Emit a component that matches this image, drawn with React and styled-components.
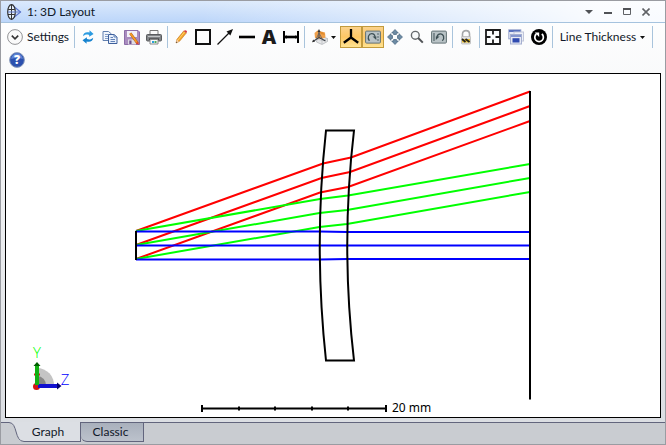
import React, { useState } from 'react';
import styled, { createGlobalStyle, css } from 'styled-components';

const GlobalStyle = createGlobalStyle`
  * {
    box-sizing: border-box;
  }

  body {
    margin: 0;
    font-family: Lato, 'Open Sans', sans-serif;
    font-size: 12px;
    line-height: 16px;
    color: #101828;
  }

  button {
    font: inherit;
    color: inherit;
    border: 0;
    padding: 0;
    background: none;
  }

  svg {
    display: block;
    flex: none;
  }
`;

const Window = styled.div`
  display: flex;
  flex-direction: column;
  min-height: 100vh;
  border: 1px solid #9a9ca2;
  background: linear-gradient(#ffffff, #f8f9fa 20%, #d9dce1);
`;

const TitleBar = styled.header`
  display: flex;
  align-items: center;
  height: 22px;
  padding: 0 10px 0 6px;
  gap: 4px;
  border-bottom: 1px solid #a6c3de;
  background:
    linear-gradient(90deg, transparent 30%, rgba(255, 255, 255, 0.9) 90%),
    linear-gradient(#dbe9fc, #bcd6fa);
`;

const Title = styled.h1`
  flex: 1;
  margin: 0;
  font-size: 12px;
  font-weight: 400;
`;

const WindowButtons = styled.div`
  display: flex;
`;

const WindowButton = styled.button`
  display: grid;
  place-items: center;
  width: 19px;
  height: 20px;
`;

const Toolbar = styled.div`
  display: flex;
  flex-wrap: wrap;
  align-items: center;
  row-gap: 1px;
  padding: 3px 5px 2px;
`;

const buttonStyle = css`
  display: flex;
  align-items: center;
  justify-content: center;
  height: 22px;
`;

const ToolButton = styled.button`
  ${buttonStyle}
  width: ${({ $wide }) => ($wide ? 24 : 22)}px;

  ${({ $active }) =>
    $active &&
    css`
      border: 1px solid #c29b3d;
      background: linear-gradient(#fbd28c, #fdc765 50%, #ffe391);
    `}
`;

const SettingsButton = styled.button`
  ${buttonStyle}
  justify-content: flex-start;
  gap: 4px;
  width: 66px;
  padding-left: 1px;
`;

const ViewButton = styled.button`
  ${buttonStyle}
  gap: 3px;
  width: 33px;
`;

const ThicknessButton = styled.button`
  ${buttonStyle}
  gap: 4px;
  width: 95px;
`;

const Separator = styled.span`
  width: 1px;
  height: 22px;
  margin: 0 2px;
  background: #a9c4dc;
`;

const Plot = styled.main`
  display: flex;
  flex: 1;
  margin: 0 4px 4px;
  border: 1px solid #000;
  background: #fff;
`;

const Drawing = styled.svg`
  flex: 1;
  width: 100%;
  min-width: 0;
`;

const ScaleText = styled.text`
  font-family: 'Noto Sans', sans-serif;
  font-size: 12px;
`;

const AxisText = styled.text`
  font-family: 'Open Sans', sans-serif;
  font-size: 15px;
  font-weight: 300;
  text-anchor: middle;
`;

const IconText = styled.text`
  font-family: 'Open Sans', sans-serif;
  font-size: 12px;
  font-weight: 800;
  text-anchor: middle;
`;

const Letter = styled.span`
  font-family: 'Open Sans', sans-serif;
  font-size: 20px;
  font-weight: 800;
  line-height: 22px;
  color: #1b1b1b;
`;

const TabStrip = styled.nav`
  display: flex;
  align-items: flex-start;
  height: 22px;
  background: #c9ccd1;
`;

const tabStyle = css`
  height: 20px;
  border-right: 1px solid #62657d;
  border-bottom: 1px solid #62657d;
`;

const GraphTab = styled.button`
  ${tabStyle}
  width: 57px;
  padding-right: 8px;
  background: #dcdfe4;
`;

const ClassicTab = styled.button`
  ${tabStyle}
  width: 63px;
  padding-right: 3px;
  border-top: 1px solid #62657d;
  border-bottom-left-radius: 6px;
  background: linear-gradient(#a9b0bc, #bcc2cc);
`;

const StripLine = styled.span`
  flex: 1;
  border-top: 1px solid #62657d;
`;

const Caret = ({ size = 5 }) => (
  <svg width={size} height="3" viewBox="0 0 5 3" preserveAspectRatio="none">
    <path d="M0 0H5L2.5 3Z" fill="#111" />
  </svg>
);

const Icon = ({ children }) => (
  <svg width="16" height="16" viewBox="0 0 16 16" fill="none" aria-hidden="true">
    {children}
  </svg>
);

const icons = {
  lens: (
    <>
      <path d="M5 1 13.5 8 5 15Z" stroke="#5f78d0" strokeWidth="1.2" fill="#cfdff8" />
      <ellipse cx="4.5" cy="8" rx="3.8" ry="7.3" fill="#e4effc" stroke="#333" strokeWidth="1.2" />
      <path d="M4.5 .5V15.5M1.2 5.5H7.8M1 10.5H7.8" stroke="#333" />
      <path d="M1 8H14" stroke="#5f78c8" />
    </>
  ),
  settings: (
    <>
      <circle cx="8" cy="8" r="7.4" fill="#fafafa" stroke="#77797c" strokeWidth="0.8" />
      <path d="M4.8 6.6 8 9.8 11.2 6.6" stroke="#333" strokeWidth="1.6" />
    </>
  ),
  refresh: (
    <>
      <path d="M3 7.2C3.2 4 6 2.6 9.5 3.6V1.2L13.6 4.9 9.2 7.8V5.9C6.7 5 5 5.4 3 7.2Z" fill="#2c9be0" />
      <path d="M13.2 8.8C13 12 10 13.5 6.6 12.4V14.8L2.5 11.2 6.9 8.2V10.1C9.3 11 11.2 10.6 13.2 8.8Z" fill="#1683cf" />
    </>
  ),
  copy: (
    <>
      <path d="M1 2.5H6.5L9.5 5V11.5H1Z" fill="#f2f6fc" stroke="#617faf" />
      <path d="M3 5.5H6M3 7.5H6M3 9.5H6" stroke="#839dc7" />
      <path d="M6.5 5.5H12L15 8V14.5H6.5Z" fill="#e7effb" stroke="#3e609c" />
      <path d="M12 5.5V8H15M8.5 8.5H11M8.5 10.5H13M8.5 12.5H13" stroke="#6383b8" />
    </>
  ),
  save: (
    <>
      <path d="M.5 1.5H14L15.5 3V15.5H.5Z" fill="#a98cbf" stroke="#8c6da8" />
      <path d="M3 2H13V8H3Z" fill="#f2eff8" />
      <path d="M4 10.5H12V15.5H4Z" fill="#dedbe4" />
      <path d="M5.3 11.5H7.5V15H5.3Z" fill="#6d4d8b" />
      <path d="M6.3 4.2 13.7 14.5" stroke="#a85f20" strokeWidth="2.6" />
      <path d="M6.3 4.2 13.7 14.5" stroke="#f69b26" strokeWidth="1.8" />
      <path d="M13 12.4 15.3 15.8 12 14.4Z" fill="#e03b2c" />
    </>
  ),
  print: (
    <>
      <path d="M4 1.5H12V6H4Z" fill="#fafafa" stroke="#777" />
      <rect x=".5" y="5.5" width="15" height="6.5" rx="1" fill="#818487" stroke="#595b5e" />
      <path d="M2 7.5H14" stroke="#c2c4c6" />
      <path d="M3 9.5H13V11H3Z" fill="#333" />
      <path d="M4 10.5H12V15H4Z" fill="#f9fbfc" stroke="#888" />
      <path d="M6 12H8V14H6Z" fill="#2ca0dc" />
      <path d="M8.5 12H10.5V14H8.5Z" fill="#50a85c" />
    </>
  ),
  pencil: (
    <>
      <path d="M3 14 4 10.3 10.7 2 13.3 4 6.5 12.3Z" fill="#f5a42a" stroke="#c1731a" strokeWidth=".6" />
      <path d="M5 11 11.5 3" stroke="#ffd36a" />
      <path d="M10.7 2 12 1.2C13 1 14.3 2 14 3.1L13.3 4Z" fill="#da3d42" />
      <path d="M3 14 4 10.3 5.8 12.6Z" fill="#f2cfab" />
      <path d="M3 14 3.3 12.6 4.2 13.4Z" fill="#333" />
    </>
  ),
  box: <path d="M1 1H15V15H1Z" stroke="#111" strokeWidth="2" />,
  arrow: (
    <>
      <path d="M.5 15.5 12 4" stroke="#111" strokeWidth="1.3" />
      <path d="M16 0 13.4 6.5 9.5 2.6Z" fill="#111" />
    </>
  ),
  line: <path d="M0 8H16" stroke="#000" strokeWidth="2.6" />,
  dimension: (
    <>
      <path d="M1 2V14M15 2V14" stroke="#000" strokeWidth="2" />
      <path d="M2 8H14" stroke="#000" strokeWidth="2.6" />
      <path d="M1.5 8 3.5 6V10ZM14.5 8 12.5 6V10Z" fill="#000" />
    </>
  ),
  view: (
    <>
      <path d="M5 10 10 7.5 15.5 9.5V12.5L10 15.5 4.5 13Z" fill="#e6e7e9" stroke="#aeb1b5" strokeWidth=".7" />
      <path d="M10 11V15M5 10 10 11.5 15.5 9.5" stroke="#b8bbbf" strokeWidth=".7" />
      <path d="M2.5 4 5.5 1.5 13 3.5 13.5 8.5 9 10 3 9Z" fill="#efa04a" />
      <path d="M7 2.5 11 3.5 13 6 9 5Z" fill="#e08a2c" />
      <path d="M7 2V8.5M7 8.5 1 12.5M7 8.5 13.5 12" stroke="#3c4047" strokeWidth="1.1" />
      <path d="M3.8 10.5 7 4 10.5 10.5" stroke="#5d6068" strokeWidth=".8" />
      <path d="M7 0 8.5 3H5.5ZM0 13.3 1.2 10.5 3 12.8Z" fill="#333" />
    </>
  ),
  axes: <path d="M8 0V9M8 8.5 .8 13.8M8 8.5 15.2 13.8" stroke="#000" strokeWidth="2.3" />,
  rotate: (
    <>
      <rect x=".6" y="2.1" width="14.8" height="12" rx="1" fill="#b9c3c6" stroke="#627174" />
      <path d="M4.4 11.8C1.9 8.8 3.7 4.7 6.7 4.7 8.5 4.7 9.8 5.8 10 8" stroke="#3e5055" strokeWidth="1.3" />
      <path d="M7.5 7.5H11.3V11Z" fill="#3e5055" />
      <path d="M13 4V12" stroke="#526368" strokeDasharray="2 1" />
    </>
  ),
  pan: (
    <path
      d="M8 .5 11.3 4H9.4V5.5H6.6V4H4.7ZM8 15.5 11.3 12H9.4V10.5H6.6V12H4.7ZM.5 8 4 4.7V6.6H5.5V9.4H4V11.3ZM15.5 8 12 4.7V6.6H10.5V9.4H12V11.3Z"
      fill="#6d8ba4"
      stroke="#46647e"
      strokeWidth=".7"
    />
  ),
  zoom: (
    <>
      <circle cx="6.3" cy="6.3" r="3.9" fill="#f8fafb" stroke="#65696c" strokeWidth="1.4" />
      <path d="M9.2 9 13.8 13.6" stroke="#505356" strokeWidth="2" />
    </>
  ),
  reset: (
    <>
      <rect x=".6" y="2.1" width="14.8" height="12" rx="1" fill="#b9c3c6" stroke="#627174" />
      <path d="M11.3 11.8C14 9 12.6 4.8 9.3 4.8 7.4 4.8 6.3 6 6 8" stroke="#3e5055" strokeWidth="1.3" />
      <path d="M4.8 7.5H8.6L4.8 11Z" fill="#3e5055" />
      <path d="M3 4V12" stroke="#526368" strokeWidth="1.2" />
    </>
  ),
  lock: (
    <>
      <path d="M4.5 8V5C4.5.5 11.5.5 11.5 5V8" stroke="#a4a6a8" strokeWidth="1.6" />
      <rect x="3.5" y="7.5" width="9" height="7.5" rx=".8" fill="#dedfe0" stroke="#aaa" strokeWidth=".6" />
      <path d="M4 10H12V13.5H4Z" fill="#e8bf32" />
      <path d="M4 10 7.5 13M7.5 10 11.5 13" stroke="#27231a" strokeWidth="1.8" />
    </>
  ),
  fit: (
    <path
      d="M1 1H15V15H1ZM8 1V5.5M8 10.5V15M1 8H5.5M10.5 8H15"
      stroke="#1b1b1b"
      strokeWidth="1.8"
    />
  ),
  windows: (
    <>
      <rect x=".8" y=".8" width="12" height="9" fill="#e6eaf5" stroke="#96a3cd" />
      <path d="M1 2H12.5" stroke="#5971bd" strokeWidth="2" />
      <rect x="6" y="3" width="9.5" height="9" fill="#eef1f8" stroke="#c0c6da" />
      <rect x="2.5" y="5.5" width="11" height="9.5" fill="#e8ebf4" stroke="#a5afd0" />
      <path d="M4.5 9.2H11.5V13.5H4.5Z" fill="#304bb0" />
      <path d="M3 7H13" stroke="#6b80c4" strokeWidth="1.6" />
    </>
  ),
  restart: (
    <>
      <circle cx="8" cy="8" r="8" fill="#000" />
      <path d="M5.4 5A4.3 4.3 0 1 0 10.8 5" stroke="#fff" strokeWidth="1.7" />
      <path d="M3.8 3.6H8.2V8Z" fill="#fff" />
    </>
  ),
  help: (
    <>
      <circle cx="8" cy="8" r="7.4" fill="#2b50ae" stroke="#8c9dbd" />
      <path d="M2.2 7A5.8 5.8 0 0 1 13.8 7C10 5.5 6 5.5 2.2 7Z" fill="#5c83d4" />
      <IconText x="8" y="12" fill="#fff">
        ?
      </IconText>
    </>
  ),
};

const Tool = ({ name, label, ...props }) => (
  <ToolButton type="button" aria-label={label} {...props}>
    <Icon>{icons[name]}</Icon>
  </ToolButton>
);

const rays = [
  {
    color: '#ff0000',
    paths: [
      'M136 231 323 163.5 351 157.5 530 91.5',
      'M136 245 321.5 178 350 172 530 106',
      'M136 259 320 192.5 348 187 530 121',
    ],
  },
  {
    color: '#00ff00',
    paths: [
      'M136 231 320 199 348 195.5 530 164',
      'M136 245 319.5 213 347 210 530 178',
      'M136 259 319.5 227 347 224 530 192',
    ],
  },
  {
    color: '#0000ff',
    paths: ['M136 231.5 320 231.5 347 232 530 232', 'M136 245.5H530', 'M136 259.5 320 259.5 347 259 530 259'],
  },
];

const ticks = [239, 275, 312, 348];

const LayoutDrawing = () => (
  <Drawing viewBox="6 74 654 343" fill="none" role="img" aria-label="3D layout">
    {rays.map(({ color, paths }) => (
      <g key={color} stroke={color} strokeWidth="2">
        {paths.map(d => (
          <path key={d} d={d} />
        ))}
      </g>
    ))}
    <g stroke="#000" strokeWidth="2">
      <path d="M136 231V260M530 91V399.5" />
      <path d="M326 130.5H354Q340.5 245 354 360.5H326Q313.5 245 326 130.5Z" />
      <path d="M202 408.5H386M202 405V412M386 405V412" />
      {ticks.map(x => (
        <path key={x} d={`M${x} 406.5V410.5`} />
      ))}
    </g>
    <ScaleText x="392" y="412" fill="#000">
      20 mm
    </ScaleText>
    <path d="M37 368A17 17 0 0 1 54 386H37Z" fill="#c4c4c4" />
    <path d="M37 376A9 9 0 0 1 46 386H37Z" fill="#858585" />
    <circle cx="36.5" cy="386.5" r="3.5" fill="#d41414" />
    <path d="M34 374.5H40" stroke="#e02020" strokeWidth="2" />
    <path d="M38 386H58" stroke="#1010d0" strokeWidth="4" />
    <path d="M57 382.5 61.5 386 57 389.5Z" fill="#000070" />
    <path d="M37 385V365" stroke="#12b012" strokeWidth="4" />
    <path d="M33.5 366 37 362 40.5 366Z" fill="#006000" />
    <AxisText x="37" y="358" fill="#00ff00">
      Y
    </AxisText>
    <AxisText x="65" y="385" fill="#0000ff">
      Z
    </AxisText>
  </Drawing>
);

const App = () => {
  const [tab, setTab] = useState('graph');

  return (
    <>
      <GlobalStyle />
      <Window>
        <TitleBar>
          <Icon>{icons.lens}</Icon>
          <Title>1: 3D Layout</Title>
          <WindowButtons>
            <WindowButton type="button" aria-label="Window menu">
              <svg width="8" height="4" viewBox="0 0 8 4">
                <path d="M0 0H8L4 4Z" fill="#505256" />
              </svg>
            </WindowButton>
            <WindowButton type="button" aria-label="Minimize">
              <svg width="8" height="8" viewBox="0 0 8 8">
                <path d="M0 5H8" stroke="#505256" strokeWidth="2" />
              </svg>
            </WindowButton>
            <WindowButton type="button" aria-label="Maximize">
              <svg width="8" height="7" viewBox="0 0 8 7" fill="none">
                <path d="M.5 1V6.5H7.5V1" stroke="#606266" />
                <path d="M0 1H8" stroke="#505256" strokeWidth="2" />
              </svg>
            </WindowButton>
            <WindowButton type="button" aria-label="Close">
              <svg width="8" height="8" viewBox="0 0 8 8">
                <path d="M.5.5 7.5 7.5M7.5.5.5 7.5" stroke="#606266" strokeWidth="1.6" />
              </svg>
            </WindowButton>
          </WindowButtons>
        </TitleBar>

        <Toolbar>
          <SettingsButton type="button">
            <Icon>{icons.settings}</Icon>
            Settings
          </SettingsButton>
          <Separator />
          <Tool name="refresh" label="Update" />
          <Tool name="copy" label="Copy" />
          <Tool name="save" label="Save" />
          <Tool name="print" label="Print" />
          <Separator />
          <Tool name="pencil" label="Annotate" />
          <Tool name="box" label="Rectangle" />
          <Tool name="arrow" label="Arrow" />
          <Tool name="line" label="Line" />
          <ToolButton type="button" aria-label="Text">
            <Letter>A</Letter>
          </ToolButton>
          <Tool name="dimension" label="Dimension" />
          <Separator />
          <ViewButton type="button" aria-label="Camera views">
            <Icon>{icons.view}</Icon>
            <Caret />
          </ViewButton>
          <Tool name="axes" label="Show axes" $active />
          <Tool name="rotate" label="Rotate" $active />
          <Tool name="pan" label="Pan" />
          <Tool name="zoom" label="Zoom" />
          <Tool name="reset" label="Reset view" />
          <Separator />
          <Tool name="lock" label="Lock window" />
          <Separator />
          <Tool name="fit" label="Fit window" />
          <Tool name="windows" label="Clone window" $wide />
          <Tool name="restart" label="Active cursor" />
          <Separator />
          <ThicknessButton type="button">
            Line Thickness
            <Caret />
          </ThicknessButton>
          <Separator />
          <Tool name="help" label="Help" />
        </Toolbar>

        <Plot>
          <LayoutDrawing />
        </Plot>

        <TabStrip>
          <svg width="23" height="20" viewBox="0 0 23 20">
            <path d="M8 .5C17 .5 13 19.5 23 19.5V0H8Z" fill="#dcdfe4" />
            <path d="M0 .5H8C17 .5 13 19.5 23 19.5" fill="none" stroke="#62657d" />
          </svg>
          <GraphTab type="button" aria-pressed={tab === 'graph'} onClick={() => setTab('graph')}>
            Graph
          </GraphTab>
          <ClassicTab type="button" aria-pressed={tab === 'classic'} onClick={() => setTab('classic')}>
            Classic
          </ClassicTab>
          <StripLine />
        </TabStrip>
      </Window>
    </>
  );
};

export default App;
